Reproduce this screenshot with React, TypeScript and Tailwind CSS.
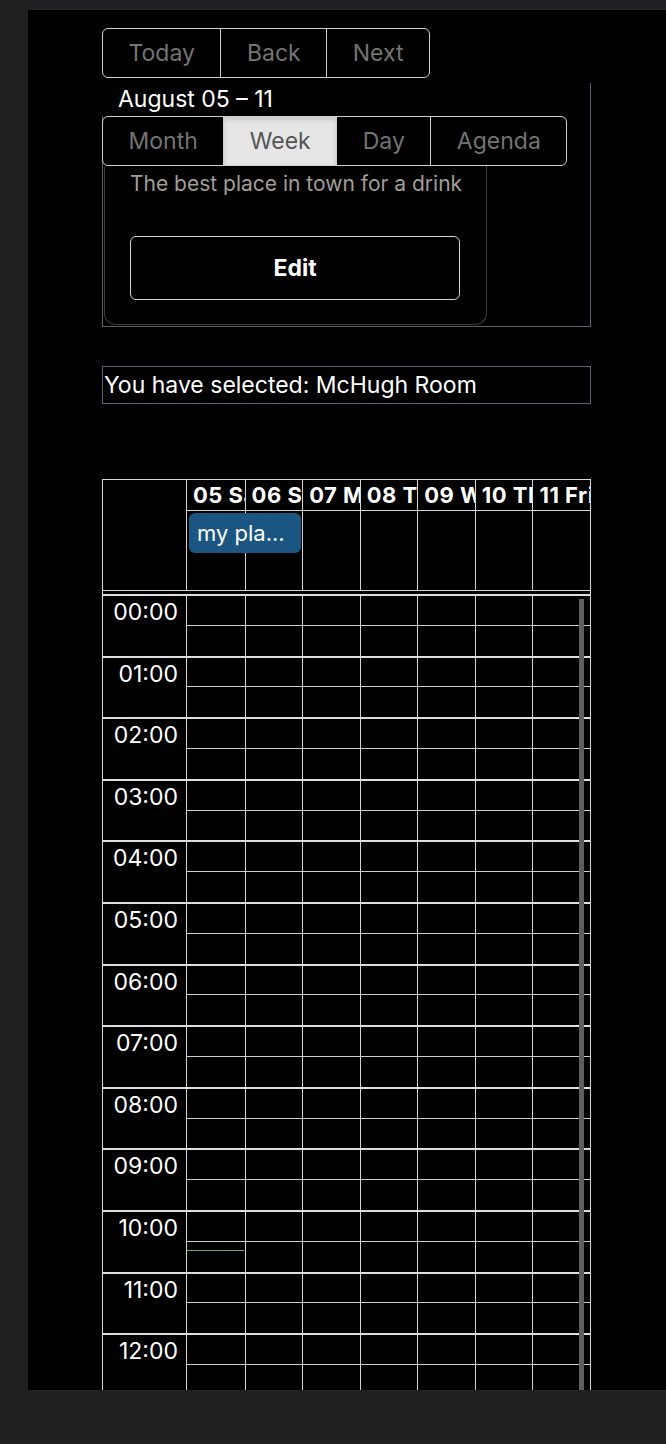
import React from 'react';

const days = ['05 Sat', '06 Sun', '07 Mon', '08 Tue', '09 Wed', '10 Thu', '11 Fri'];
const hours = Array.from({ length: 24 }, (_, i) => `${String(i).padStart(2, '0')}:00`);

const ToolbarButton: React.FC<{ label: string; first?: boolean; active?: boolean }> = ({
  label,
  first,
  active,
}) => (
  <button
    className={
      'h-[48px] px-[25.5px] pt-px text-[23px] ' +
      (first ? '' : 'border-l border-[#cfcfcf] ') +
      (active ? 'bg-[#e6e6e6] text-[#555] shadow-[inset_0_3px_5px_rgba(0,0,0,0.125)]' : 'text-[#747474]')
    }
  >
    {label}
  </button>
);

export default function App() {
  return (
    <div className="min-h-screen bg-[#202022] pt-[10px] pl-[28px] font-['Inter',sans-serif]">
      <div className="h-[1380px] overflow-hidden bg-black pt-[18px] pl-[74px]">
        <div className="w-[489px]">
          {/* Nav toolbar */}
          <div className="flex w-max overflow-hidden rounded-[6px] border border-[#cfcfcf]">
            <ToolbarButton label="Today" first />
            <ToolbarButton label="Back" />
            <ToolbarButton label="Next" />
          </div>

          {/* Resource panel */}
          <div className="mt-[5px] border-x border-b border-[#5b6170]">
            <div className="-ml-px h-[33px] bg-black pl-[16px] text-[23px] leading-[33px] text-white">
              August 05 – 11
            </div>
            <div className="-ml-px flex w-max overflow-hidden rounded-[6px] border border-[#cfcfcf] bg-black">
              <ToolbarButton label="Month" first />
              <ToolbarButton label="Week" active />
              <ToolbarButton label="Day" />
              <ToolbarButton label="Agenda" />
            </div>
            <div className="mb-px ml-px w-[383px] rounded-b-[12px] border-x border-b border-[#3a3a3a] px-[25px] pt-[4px] pb-[24px]">
              <p className="whitespace-nowrap text-[21px] leading-[28px] text-[#a39d98]">
                The best place in town for a drink
              </p>
              <button className="mt-[38px] h-[64px] w-[330px] rounded-[6px] border border-[#d2d2d2] text-[23px] font-bold text-white">
                Edit
              </button>
            </div>
          </div>

          <div className="mt-[39px] h-[38px] border border-[#5b6170] pl-px text-[23px] leading-[36px] text-white">
            You have selected: McHugh Room
          </div>

          {/* Week calendar */}
          <div className="mt-[75px] border border-[#d4d4d4]">
            <div className="flex border-b border-[#d4d4d4]">
              <div className="w-[84px] shrink-0 border-r border-[#d4d4d4]" />
              <div className="flex-1">
                <div className="grid h-[31px] grid-cols-7 border-b border-[#d4d4d4]">
                  {days.map((d, i) => (
                    <div
                      key={d}
                      className={
                        'overflow-hidden whitespace-nowrap pl-[6px] text-[22px] font-bold tracking-[0.5px] leading-[31px] text-white ' +
                        (i > 0 ? 'border-l border-[#d4d4d4]' : '')
                      }
                    >
                      {d}
                    </div>
                  ))}
                </div>
                <div className="relative grid h-[79px] grid-cols-7">
                  {days.map((d, i) => (
                    <div key={d} className={i > 0 ? 'border-l border-[#d4d4d4]' : ''} />
                  ))}
                  <div className="absolute top-[2px] left-[2px] h-[40px] w-[112px] rounded-[6px] bg-[#1b5581] pl-[8px] text-[22px] leading-[40px] text-white">
                    my pla...
                  </div>
                </div>
              </div>
            </div>

            <div className="relative mt-[3px]">
              {hours.map((h) => (
                <div key={h} className="flex h-[61.6px] border-t-2 border-[#dedede]">
                  <div className="w-[84px] shrink-0 border-r border-[#d4d4d4] pt-[2px] pr-[8px] text-right text-[23px] leading-[28px] text-white">
                    {h}
                  </div>
                  <div className="grid flex-1 grid-cols-7">
                    {days.map((d, i) => (
                      <div key={d} className={'flex flex-col ' + (i > 0 ? 'border-l border-[#d4d4d4]' : '')}>
                        <div className="h-[29.8px] border-b border-[#cccccc]" />
                      </div>
                    ))}
                  </div>
                </div>
              ))}
              <div className="absolute top-[656px] left-[84px] h-px w-[57px] bg-[#74a84a]" />
              <div className="absolute top-[5px] right-[6px] h-[800px] w-[5px] bg-[#5e5e5e]" />
            </div>
          </div>
        </div>
      </div>
    </div>
  );
}
